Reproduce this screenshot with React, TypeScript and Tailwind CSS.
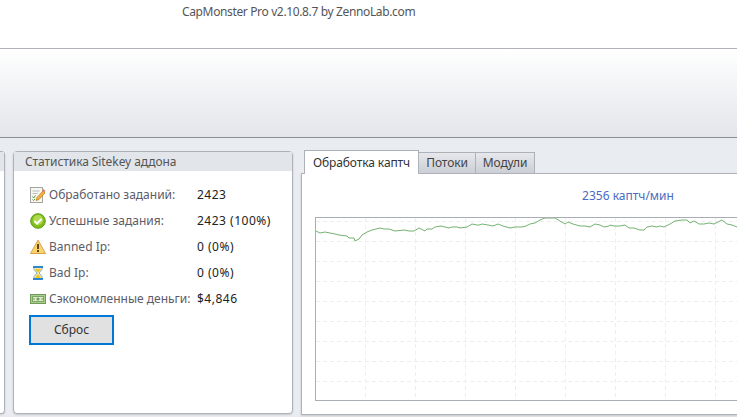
const font = "font-['Noto_Sans',sans-serif]";

const linePoints =
  "316,231 320,233 325,232 330,233 335,234 339,235 347,236 349,238 354,238 355,241 359,239 362,235 367,232 372,230 380,228 384,229 389,229 395,231 404,230 409,231 414,231 419,228 425,231 427,229 432,229 435,227 441,226 449,228 452,227 457,227 460,228 467,227 472,224 477,225 479,225 482,224 488,225 493,226 498,224 503,226 510,228 515,227 522,227 526,226 530,224 535,223 540,220 545,218 555,218 560,221 565,224 568,222 573,224 580,226 585,226 590,227 595,224 600,225 604,227 609,226 610,225 614,226 620,226 625,225 629,228 634,228 640,230 644,230 647,227 652,226 657,227 660,226 664,227 670,224 675,221 682,220 687,220 690,223 694,221 699,224 704,224 709,223 714,224 722,220 727,224 732,225 737,227";

const NotepadIcon = () => (
  <svg width="16" height="16" viewBox="0 0 16 16">
    <rect x="0.5" y="0.5" width="12" height="15" fill="#f6f6f2" stroke="#a4a4a0" />
    <path d="M2.5 4h7M2.5 6.500h5" stroke="#bdbdb8" />
    <path d="M2.500 9.500l1.200 1.500L5.500 8.500M2.500 12.500l1 1 1.500-1.500" stroke="#4d9a3a" fill="none" />
    <path d="M6 13.500l1-3 6-6.500 2 2-6 6.500z" fill="#f3b23c" stroke="#b9771f" strokeWidth="0.7" />
    <path d="M12.500 3l1-1 2 2-1 1z" fill="#e0705a" />
  </svg>
);

const CheckIcon = () => (
  <svg width="16" height="16" viewBox="0 0 16 16">
    <circle cx="8" cy="8" r="7.300" fill="#7fbe1c" stroke="#5f9a14" />
    <circle cx="8" cy="7" r="5" fill="#add94f" />
    <path d="M4.500 8l2.500 2.500 4.500-4.500" fill="none" stroke="#fff" strokeWidth="2" />
  </svg>
);

const WarningIcon = () => (
  <svg width="16" height="16" viewBox="0 0 16 16">
    <path d="M8 1L15.500 14.500H0.500Z" fill="#fad468" stroke="#d9a050" />
    <path d="M8 5v5" stroke="#5a4526" strokeWidth="2" />
    <rect x="7" y="11" width="2" height="2" fill="#5a4526" />
  </svg>
);

const HourglassIcon = () => (
  <svg width="16" height="16" viewBox="0 0 16 16">
    <path d="M4 2h8v2.500L9 8l3 3.500V14H4v-2.500L7 8 4 4.500z" fill="#fbe9a0" stroke="#7fb0d8" />
    <path d="M5 4h6L8 7.500zM8 9l3 4H5z" fill="#f5c21f" />
    <rect x="3" y="1" width="10" height="2" fill="#2f86d0" />
    <rect x="3" y="13" width="10" height="2" fill="#2f86d0" />
  </svg>
);

const MoneyIcon = () => (
  <svg width="16" height="16" viewBox="0 0 16 16">
    <rect x="0.500" y="3.500" width="15" height="9" fill="#a9cf8e" stroke="#6f9a58" />
    <rect x="2.500" y="5.500" width="11" height="5" fill="#dcebc8" stroke="#7da565" />
    <circle cx="8" cy="8" r="1.500" fill="#6f9a58" />
    <path d="M4 7v2M12 7v2" stroke="#6f9a58" />
  </svg>
);

const rows = [
  { icon: <NotepadIcon />, label: "Обработано заданий:", value: "2423" },
  { icon: <CheckIcon />, label: "Успешные задания:", value: "2423 (100%)" },
  { icon: <WarningIcon />, label: "Banned Ip:", value: "0 (0%)" },
  { icon: <HourglassIcon />, label: "Bad Ip:", value: "0 (0%)" },
  { icon: <MoneyIcon />, label: "Сэкономленные деньги:", value: "$4,846" },
];

const verticals = [365, 415, 465, 515, 565, 615, 665, 715, 765, 815, 865, 915];
const horizontals = [221, 241, 261, 281, 301, 321, 341, 361, 381];

const Chart = () => (
  <div className="h-[184px] border border-[#a9aeb6] bg-white">
    <svg width="624" height="182" viewBox="316 218 624 182">
      {verticals.map((x) => (
        <line key={x} x1={x + 0.5} y1="218" x2={x + 0.5} y2="400" stroke="#eeeeee" strokeDasharray="4 3" />
      ))}
      {horizontals.map((y) => (
        <line key={y} x1="316" y1={y + 0.5} x2="940" y2={y + 0.5} stroke="#eeeeee" strokeDasharray="4 3" />
      ))}
      <polyline points={linePoints} fill="none" stroke="#74b374" strokeWidth="1" />
    </svg>
  </div>
);

const App = () => {
  return (
    <div className={`${font} h-[417px] w-[737px] overflow-hidden bg-[#e9ecf0] text-[12px]`}>
      {/* Title bar */}
      <div className="flex h-[49px] border-b border-[#b0b3bb] bg-white pl-[182px] pt-[3px] tracking-[-0.36px] text-[#555555]">
        CapMonster Pro v2.10.8.7 by ZennoLab.com
      </div>

      {/* Empty ribbon */}
      <div className="h-[89px] border-b border-[#8c8f96] bg-gradient-to-b from-white to-[#e2e5ea]" />

      <div className="flex items-start gap-2 pt-3">
        {/* Cut off panel on the left */}
        <div className="mt-px h-[263px] w-[5px] shrink-0 rounded-r-sm border-y border-r border-[#adb2b8] bg-white shadow-[0_1px_2px_rgba(0,0,0,0.15)]">
          <div className="h-[19px] bg-[#e2e5ea]" />
        </div>

        {/* Sitekey stats */}
        <div className="mt-px h-[263px] w-[280px] shrink-0 rounded-sm border border-[#adb2b8] bg-white shadow-[0_1px_2px_rgba(0,0,0,0.15)]">
          <div className="flex h-[19px] items-center bg-[#e2e5ea] pl-[11px] tracking-[-0.08px] text-[#555555]">
            Статистика Sitekey аддона
          </div>
          <div className="pl-4 pt-[11px]">
            {rows.map((row) => (
              <div key={row.label} className="flex h-[26px] items-center">
                <span className="w-[19px] shrink-0">{row.icon}</span>
                <span className="w-[148px] shrink-0 whitespace-nowrap text-[#5c5c68]">{row.label}</span>
                <span className="tracking-[0.5px] text-[#222222]">{row.value}</span>
              </div>
            ))}
            <button className="-ml-px mt-[3px] h-[30px] w-[85px] border-2 border-[#0078d7] bg-[#e1e1e1] text-[#333333]">
              Сброс
            </button>
          </div>
        </div>

        {/* Tabs with chart */}
        <div className="w-[654px] shrink-0">
          <div className="relative z-10 -mb-px flex items-end pl-[3px]">
            <div className="flex h-6 w-[115px] items-center justify-center border-x border-t border-[#adb2b8] bg-white tracking-[-0.1px] text-[#333333]">
              Обработка каптч
            </div>
            <div className="flex h-[22px] w-[57px] items-center justify-center border-r border-t border-b border-[#adb2b8] bg-gradient-to-b from-[#e6e8ec] to-[#cbced5] tracking-[-0.1px] text-[#444444]">
              Потоки
            </div>
            <div className="flex h-[22px] w-[59px] items-center justify-center border-r border-t border-b border-[#adb2b8] bg-gradient-to-b from-[#e6e8ec] to-[#cbced5] tracking-[-0.1px] text-[#444444]">
              Модули
            </div>
          </div>
          <div className="h-[242px] border border-[#adb2b8] bg-white px-[13px] pt-3 shadow-[0_1px_2px_rgba(0,0,0,0.15)]">
            <div className="flex h-5 items-center justify-center text-[#4a6bc0]">2356 каптч/мин</div>
            <div className="mt-[11px]">
              <Chart />
            </div>
          </div>
        </div>
      </div>
    </div>
  );
};

export default App;
